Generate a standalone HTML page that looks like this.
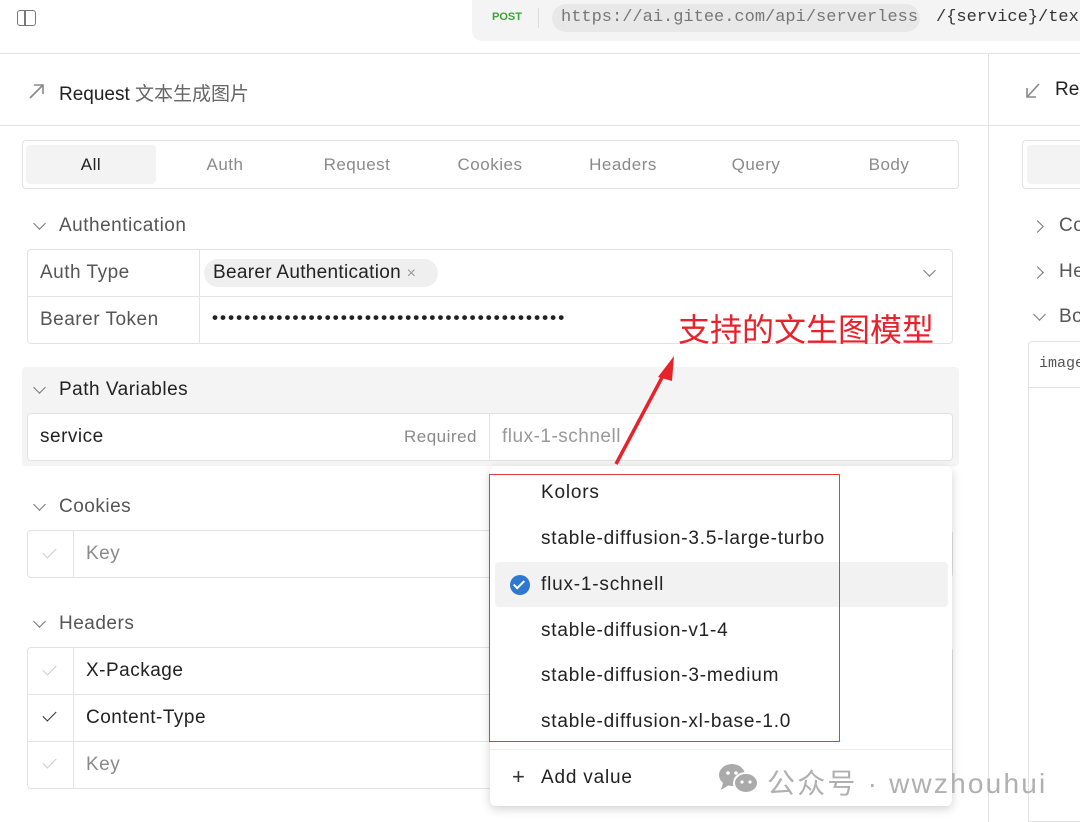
<!DOCTYPE html>
<html><head><meta charset="utf-8"><style>
*{box-sizing:border-box;margin:0;padding:0}
body{width:1080px;height:822px;overflow:hidden;background:#fff;font-family:"Liberation Sans","Noto Sans CJK SC",sans-serif;color:#222;position:relative;font-size:19px;letter-spacing:0.5px}
.a{position:absolute;white-space:nowrap}
.g{color:#8a8a8a}
.line{position:absolute;background:#e3e3e3}
.box{position:absolute;border:1px solid #e2e2e2;border-radius:4px;background:#fff}
.chev{position:absolute;width:9px;height:9px;border-right:1.6px solid #777;border-bottom:1.6px solid #777;transform:rotate(45deg)}
.chr{position:absolute;width:9px;height:9px;border-right:1.6px solid #777;border-bottom:1.6px solid #777;transform:rotate(-45deg)}
.ck{position:absolute;width:7px;height:13px;border-right:1.6px solid #ccc;border-bottom:1.6px solid #ccc;transform:rotate(45deg)}
.mono{font-family:"Liberation Mono",monospace;letter-spacing:0}
.dd{letter-spacing:0.8px}
</style></head><body>
<div class="a" style="left:17px;top:10px;width:19px;height:16px;border:1.6px solid #777;border-radius:3px"></div>
<div class="a" style="left:24px;top:10px;width:1.6px;height:16px;background:#777"></div>
<div class="a" style="left:472px;top:0;width:608px;height:41px;background:#f4f4f4;border-bottom-left-radius:10px"></div>
<div class="a" style="left:492px;top:11px;font-size:11px;font-weight:bold;color:#3aa33a;letter-spacing:0">POST</div>
<div class="a" style="left:538px;top:8px;width:1px;height:20px;background:#ddd"></div>
<div class="a mono" style="left:552px;top:4px;width:368px;height:28px;background:#e8e8e8;border-radius:14px;font-size:17px;color:#777;padding:4px 0 0 9px">https://ai.gitee.com/api/serverless</div>
<div class="a mono" style="left:936px;top:8px;font-size:17px;color:#333">/{service}/text</div>
<div class="line" style="left:0;top:53px;width:1080px;height:1px"></div>
<div class="line" style="left:988px;top:54px;width:1px;height:768px"></div>
<svg class="a" style="left:28px;top:82px" width="18" height="18"><path d="M2 16L15 3M6 3H15V12" stroke="#888" stroke-width="1.6" fill="none"/></svg>
<div class="a" style="left:59px;top:79px;font-size:19px;letter-spacing:0">Request <span style="color:#666">文本生成图片</span></div>
<div class="line" style="left:0;top:125px;width:988px;height:1px"></div>
<div class="box" style="left:22px;top:140px;width:937px;height:49px"></div>
<div class="a" style="left:26px;top:145px;width:130px;height:39px;background:#f3f3f3;border-radius:4px"></div>
<div class="a" style="left:26px;top:155px;width:130px;text-align:center;font-size:17px">All</div>
<div class="a g" style="left:160px;top:155px;width:130px;text-align:center;font-size:17px">Auth</div>
<div class="a g" style="left:292px;top:155px;width:130px;text-align:center;font-size:17px">Request</div>
<div class="a g" style="left:425px;top:155px;width:130px;text-align:center;font-size:17px">Cookies</div>
<div class="a g" style="left:558px;top:155px;width:130px;text-align:center;font-size:17px">Headers</div>
<div class="a g" style="left:691px;top:155px;width:130px;text-align:center;font-size:17px">Query</div>
<div class="a g" style="left:824px;top:155px;width:130px;text-align:center;font-size:17px">Body</div>
<div class="chev" style="left:35px;top:219px"></div>
<div class="a" style="left:59px;top:215px;color:#555">Authentication</div>
<div class="box" style="left:27px;top:249px;width:926px;height:95px"></div>
<div class="line" style="left:28px;top:296px;width:924px;height:1px"></div>
<div class="line" style="left:199px;top:250px;width:1px;height:93px"></div>
<div class="a" style="left:40px;top:262px;color:#555">Auth Type</div>
<div class="a" style="left:40px;top:309px;color:#555">Bearer Token</div>
<div class="a" style="left:204px;top:259px;width:234px;height:28px;background:#efefef;border-radius:14px;padding:3px 0 0 9px;color:#222;letter-spacing:0.3px">Bearer Authentication <span style="color:#999;font-size:16px">×</span></div>
<div class="chev" style="left:925px;top:266px"></div>
<div class="a" style="left:212px;top:308px;font-size:17px;letter-spacing:2.1px;font-weight:bold">••••••••••••••••••••••••••••••••••••••••••••</div>
<div class="a" style="left:22px;top:367px;width:937px;height:99px;background:#f4f4f4;border-radius:4px"></div>
<div class="chev" style="left:35px;top:383px"></div>
<div class="a" style="left:59px;top:379px">Path Variables</div>
<div class="box" style="left:27px;top:413px;width:926px;height:48px"></div>
<div class="line" style="left:489px;top:414px;width:1px;height:46px"></div>
<div class="a" style="left:40px;top:426px">service</div>
<div class="a g" style="left:404px;top:427px;font-size:17px">Required</div>
<div class="a" style="left:502px;top:426px;color:#999">flux-1-schnell</div>
<div class="chev" style="left:35px;top:500px"></div>
<div class="a" style="left:59px;top:496px;color:#555">Cookies</div>
<div class="box" style="left:27px;top:530px;width:926px;height:48px"></div>
<div class="line" style="left:73px;top:531px;width:1px;height:46px"></div>
<div class="ck" style="left:46px;top:545px"></div>
<div class="a g" style="left:86px;top:543px">Key</div>
<div class="chev" style="left:35px;top:617px"></div>
<div class="a" style="left:59px;top:613px;color:#555">Headers</div>
<div class="box" style="left:27px;top:647px;width:926px;height:142px"></div>
<div class="line" style="left:28px;top:694px;width:924px;height:1px"></div>
<div class="line" style="left:28px;top:741px;width:924px;height:1px"></div>
<div class="line" style="left:73px;top:648px;width:1px;height:140px"></div>
<div class="ck" style="left:46px;top:662px"></div>
<div class="ck" style="left:46px;top:708px;border-color:#333"></div>
<div class="ck" style="left:46px;top:755px"></div>
<div class="a" style="left:86px;top:660px">X-Package</div>
<div class="a" style="left:86px;top:707px">Content-Type</div>
<div class="a g" style="left:86px;top:754px">Key</div>
<div class="a" style="left:490px;top:466px;width:462px;height:340px;background:#fff;border-radius:6px;box-shadow:0 3px 10px rgba(0,0,0,.18)"></div>
<div class="a" style="left:495px;top:562px;width:453px;height:45px;background:#f2f2f2;border-radius:4px"></div>
<div class="a" style="left:489px;top:474px;width:351px;height:268px;border:1px solid #e53b3b"></div>
<div class="a dd" style="left:541px;top:482px">Kolors</div>
<div class="a dd" style="left:541px;top:528px">stable-diffusion-3.5-large-turbo</div>
<div class="a" style="left:510px;top:575px;width:20px;height:20px;border-radius:50%;background:#2f78d0"></div>
<div class="a" style="left:516px;top:578px;width:6px;height:11px;border-right:2px solid #fff;border-bottom:2px solid #fff;transform:rotate(45deg)"></div>
<div class="a dd" style="left:541px;top:574px">flux-1-schnell</div>
<div class="a dd" style="left:541px;top:620px">stable-diffusion-v1-4</div>
<div class="a dd" style="left:541px;top:665px">stable-diffusion-3-medium</div>
<div class="a dd" style="left:541px;top:711px">stable-diffusion-xl-base-1.0</div>
<div class="line" style="left:490px;top:749px;width:462px;height:1px;background:#eee"></div>
<div class="a" style="left:512px;top:764px;font-size:22px;color:#333;font-weight:300">+</div>
<div class="a dd" style="left:541px;top:767px">Add value</div>
<div class="a" style="left:678px;top:305px;font-size:32px;color:#e8222a;font-family:'Noto Sans CJK SC',sans-serif;letter-spacing:0">支持的文生图模型</div>
<svg class="a" style="left:600px;top:350px" width="90" height="120"><path d="M16 114L66 20" stroke="#e8222a" stroke-width="3.5"/><path d="M74 6L58 27L72 31Z" fill="#e8222a"/></svg>
<svg class="a" style="left:1024px;top:82px" width="18" height="18"><path d="M15 2L3 15M3 6V15H12" stroke="#888" stroke-width="1.6" fill="none"/></svg>
<div class="a" style="left:1055px;top:79px;font-size:19px;letter-spacing:0">Res</div>
<div class="line" style="left:989px;top:125px;width:91px;height:1px"></div>
<div class="box" style="left:1022px;top:140px;width:80px;height:49px"></div>
<div class="a" style="left:1027px;top:145px;width:60px;height:39px;background:#f3f3f3;border-radius:4px"></div>
<div class="chr" style="left:1033px;top:222px"></div>
<div class="a" style="left:1059px;top:215px;color:#555">Co</div>
<div class="chr" style="left:1033px;top:268px"></div>
<div class="a" style="left:1059px;top:261px;color:#555">He</div>
<div class="chev" style="left:1035px;top:310px"></div>
<div class="a" style="left:1059px;top:306px;color:#555">Bo</div>
<div class="box" style="left:1028px;top:341px;width:70px;height:481px;border-radius:4px 0 0 0"></div>
<div class="line" style="left:1029px;top:387px;width:60px;height:1px"></div>
<div class="a mono" style="left:1039px;top:355px;font-size:15px;color:#555">image</div>
<svg class="a" style="left:718px;top:763px" width="42" height="32"><ellipse cx="14" cy="12" rx="13" ry="11" fill="#aaa"/><path d="M5 20L3 27L11 22Z" fill="#aaa"/><ellipse cx="28" cy="20" rx="12" ry="10" fill="#aaa" stroke="#fff" stroke-width="2"/><circle cx="10" cy="10" r="1.8" fill="#fff"/><circle cx="18" cy="10" r="1.8" fill="#fff"/><circle cx="24" cy="19" r="1.6" fill="#fff"/><circle cx="32" cy="19" r="1.6" fill="#fff"/></svg>
<div class="a" style="left:767px;top:762px;font-size:28px;color:#b0b0b0;letter-spacing:2.2px">公众号 · wwzhouhui</div>
</body></html>
